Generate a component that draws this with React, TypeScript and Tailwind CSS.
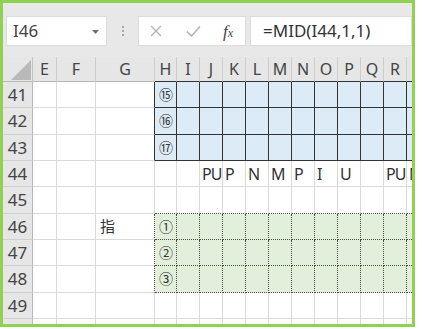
import React from 'react';

const font = { fontFamily: '"Noto Sans", "Noto Sans CJK JP", sans-serif' };

const cols = [
  { k: 'E', w: 'w-[24px]' },
  { k: 'F', w: 'w-[39px]' },
  { k: 'G', w: 'w-[59px]' },
  { k: 'H', w: 'w-[22px]' },
  { k: 'I', w: 'w-[23px]' },
  { k: 'J', w: 'w-[23px]' },
  { k: 'K', w: 'w-[23px]' },
  { k: 'L', w: 'w-[23px]' },
  { k: 'M', w: 'w-[23px]' },
  { k: 'N', w: 'w-[23px]' },
  { k: 'O', w: 'w-[23px]' },
  { k: 'P', w: 'w-[23px]' },
  { k: 'Q', w: 'w-[23px]' },
  { k: 'R', w: 'w-[23px]' },
  { k: 'S', w: 'w-[23px]' },
];

// row 50 is only a sliver at the bottom edge, so no number is drawn for it
const rows = [41, 42, 43, 44, 45, 46, 47, 48, 49, 50];

const values: Record<string, string> = {
  H41: '⑮',
  H42: '⑯',
  H43: '⑰',
  J44: 'PU',
  K44: 'P',
  L44: 'N',
  M44: 'M',
  N44: 'P',
  O44: 'I',
  P44: 'U',
  R44: 'PU',
  S44: 'N',
  G46: '指',
  H46: '①',
  H47: '②',
  H48: '③',
};

const inBlue = (r: number, c: number) => r >= 41 && r <= 43 && c >= 3 && c < cols.length;
const inGreen = (r: number, c: number) => r >= 46 && r <= 48 && c >= 3 && c < cols.length;

function cellClass(r: number, c: number) {
  const cls: string[] = ['border-r', 'border-b', 'shrink-0', 'flex', 'items-center', 'overflow-hidden', 'whitespace-nowrap'];
  if (inBlue(r, c) || inBlue(r, c + 1)) cls.push('border-r-[#333]');
  else if (inGreen(r, c) || inGreen(r, c + 1)) cls.push('border-r-[#4a4a4a]', '[border-right-style:dotted]');
  else cls.push('border-r-[#dadada]');

  if (inBlue(r, c) || inBlue(r + 1, c)) cls.push('border-b-[#333]');
  else if (inGreen(r, c) || inGreen(r + 1, c)) cls.push('border-b-[#4a4a4a]', '[border-bottom-style:dotted]');
  else cls.push('border-b-[#dadada]');

  if (inBlue(r, c)) cls.push('bg-[#ddebf7]');
  else if (inGreen(r, c)) cls.push('bg-[#e2efda]');
  else cls.push('bg-white');
  return cls.join(' ');
}

function FormulaBar() {
  return (
    <div className="h-[54px] shrink-0 flex items-start pt-[13px] bg-[#e8e8e8]">
      <div className="ml-[3px] w-[101px] h-[30px] bg-white border border-[#dcdcdc] flex items-center justify-between pl-[6px] pr-[7px]">
        <span className="text-[17px] text-[#444]">I46</span>
        <svg width="7" height="4" viewBox="0 0 7 4" className="mt-[1px]">
          <path d="M0 0h7L3.5 4z" fill="#707070" />
        </svg>
      </div>
      <div className="w-[31px] h-[30px] flex flex-col items-center justify-center gap-[2px]">
        <span className="block w-[2px] h-[2px] bg-[#a8a8a8]" />
        <span className="block w-[2px] h-[2px] bg-[#a8a8a8]" />
        <span className="block w-[2px] h-[2px] bg-[#a8a8a8]" />
      </div>
      <div className="w-[108px] h-[30px] bg-white border border-[#dcdcdc] flex items-center pl-[11px]">
        <svg width="12" height="12" viewBox="0 0 12 12">
          <path d="M1 1L11 11M11 1L1 11" stroke="#b4b4b4" strokeWidth="1.4" />
        </svg>
        <svg width="15" height="12" viewBox="0 0 15 12" className="ml-[24px]">
          <path d="M1 6.5L5.5 11L14 1.5" stroke="#b4b4b4" strokeWidth="1.6" fill="none" />
        </svg>
        <span
          className="ml-[22px] italic text-[17px] text-[#444] leading-none"
          style={{ fontFamily: '"Liberation Serif", serif' }}
        >
          f<span className="text-[12px]">x</span>
        </span>
      </div>
      <div className="ml-[4px] flex-1 h-[30px] bg-white border border-[#dcdcdc] flex items-center pl-[12px]">
        <span className="text-[17px] text-[#333] whitespace-nowrap">=MID(I44,1,1)</span>
      </div>
    </div>
  );
}

function HeaderRow() {
  return (
    <div className="flex h-[25px] shrink-0">
      <div className="w-[30px] shrink-0 bg-[#e6e6e6] border-r border-b border-r-[#c4c4c4] border-b-[#b8b8b8] flex items-end justify-end pr-[1px] pb-[1px]">
        <svg width="20" height="20" viewBox="0 0 20 20">
          <path d="M20 0V20H0z" fill="#b9b9b9" />
        </svg>
      </div>
      {cols.map((col, c) => (
        <div
          key={col.k}
          className={`${col.w} shrink-0 bg-[#e6e6e6] border-r border-b border-r-[#cdcdcd] ${
            inBlue(41, c) ? 'border-b-[#333]' : 'border-b-[#b8b8b8]'
          } flex items-center justify-center text-[16px] text-[#444] overflow-hidden`}
        >
          {col.k}
        </div>
      ))}
    </div>
  );
}

function DataRow({ r }: { r: number }) {
  return (
    <div className="flex h-[26.33px] shrink-0">
      <div className="w-[30px] shrink-0 bg-[#e6e6e6] border-r border-b border-r-[#b8b8b8] border-b-[#cfcfcf] flex items-center justify-center text-[17px] text-[#444]">
        {r < 50 ? r : null}
      </div>
      {cols.map((col, c) => {
        const v = values[col.k + r];
        const circled = v && /[①-⑳]/.test(v);
        return (
          <div key={col.k} className={`${col.w} ${cellClass(r, c)}`}>
            {v && (
              <span
                className={
                  circled
                    ? 'pl-[4px] text-[14px] text-[#333]'
                    : v === '指'
                    ? 'pl-[4px] text-[15px] text-[#333]'
                    : 'pl-[2px] text-[16px] tracking-[-1px] text-[#333]'
                }
              >
                {v}
              </span>
            )}
          </div>
        );
      })}
    </div>
  );
}

export default function App() {
  return (
    <div className="w-[422px] h-[329px] bg-white" style={font}>
      <div className="w-[415px] h-[327px] border-[3px] border-[#8fd150] overflow-hidden flex flex-col bg-white">
        <FormulaBar />
        <div className="flex flex-col">
          <HeaderRow />
          {rows.map((r) => (
            <DataRow key={r} r={r} />
          ))}
        </div>
      </div>
    </div>
  );
}
